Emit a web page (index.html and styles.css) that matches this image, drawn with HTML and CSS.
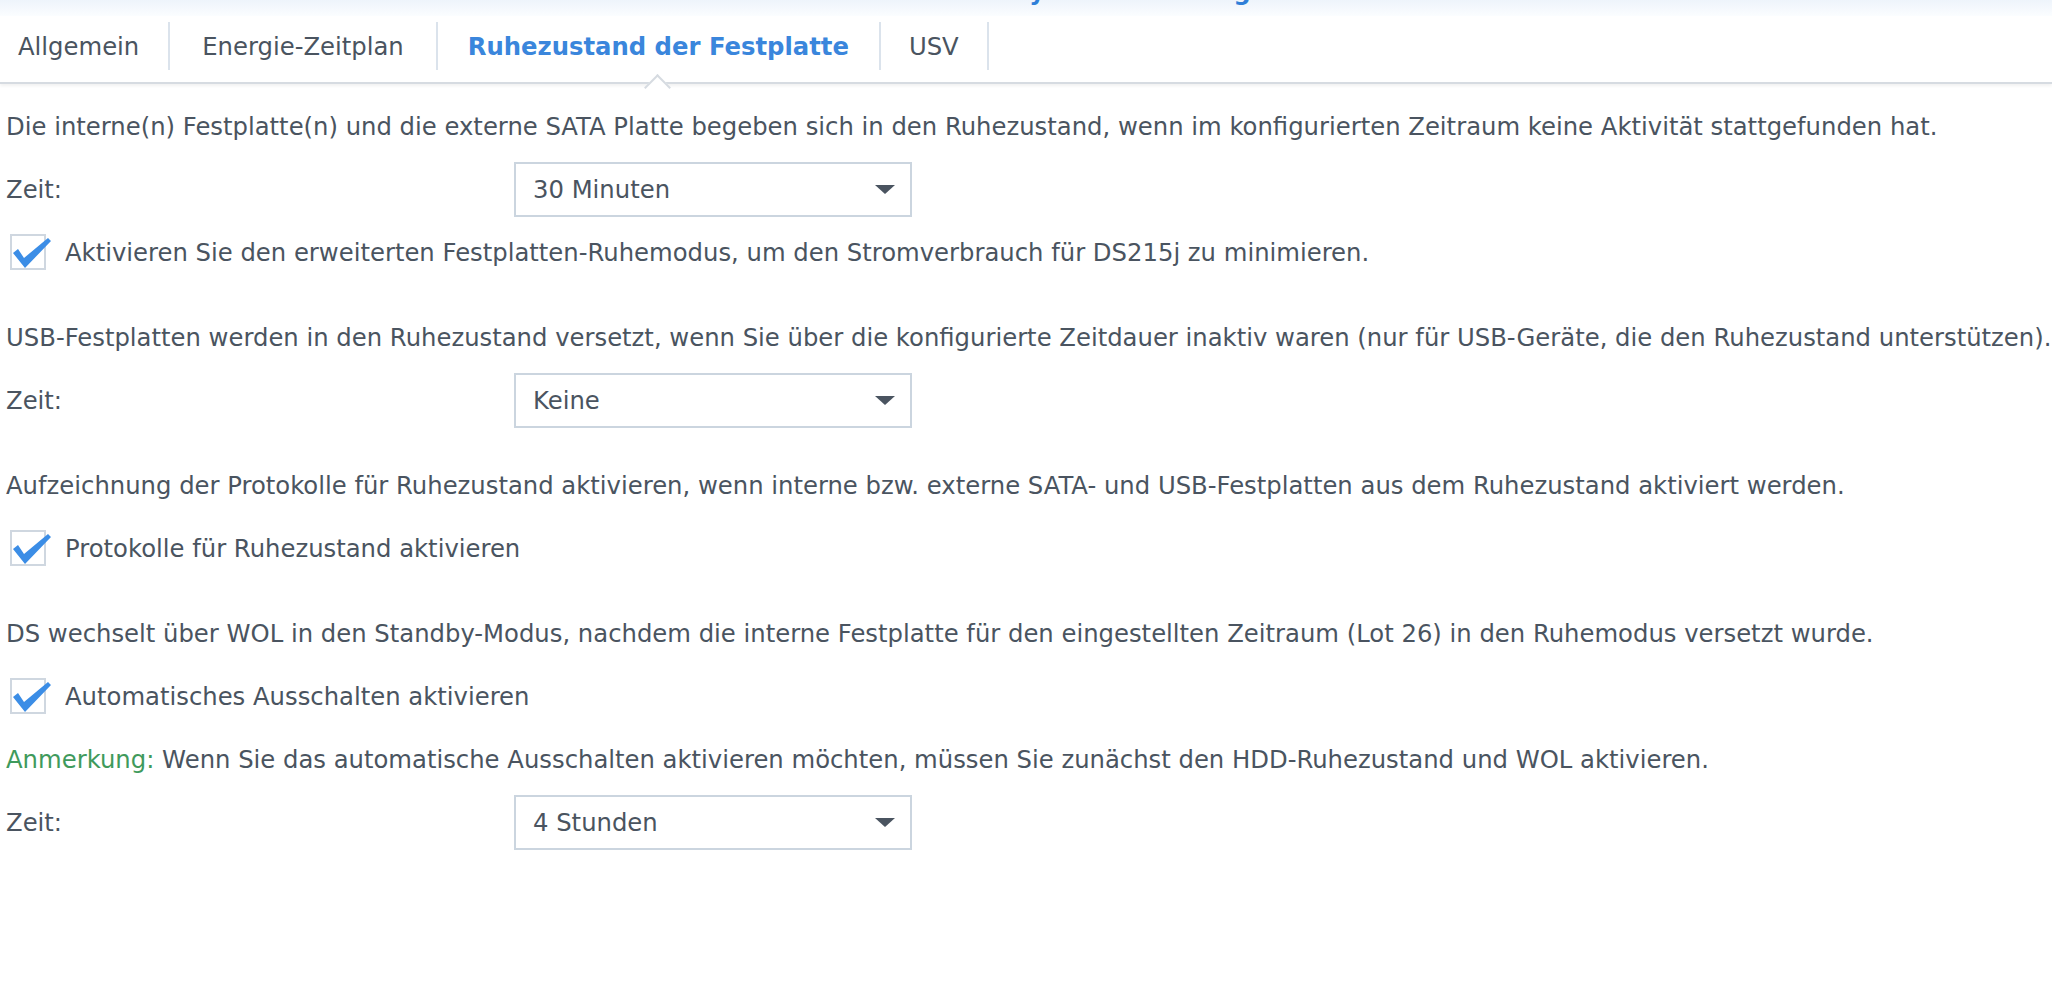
FILE: index.html
```html
<!DOCTYPE html>
<html lang="de">
<head>
  <meta charset="UTF-8">
  <title>Systemsteuerung</title>
  <link rel="stylesheet" href="styles.css">
</head>
<body>

  <div class="titlebar">
    <div class="title">Systemsteuerung</div>
  </div>

  <div class="tabs">
    <div class="tab first">Allgemein</div>
    <div class="tab">Energie-Zeitplan</div>
    <div class="tab active">Ruhezustand der Festplatte</div>
    <div class="tab last">USV</div>
  </div>

  <div class="content">

    <div class="section">
      <div class="row">Die interne(n) Festplatte(n) und die externe SATA Platte begeben sich in den Ruhezustand, wenn im konfigurierten Zeitraum keine Aktivität stattgefunden hat.</div>
      <div class="row">
        <label class="field-label">Zeit:</label>
        <div class="select"><span>30 Minuten</span><i class="arrow"></i></div>
      </div>
      <div class="row">
        <svg class="check" width="44" height="38" viewBox="0 0 44 38">
          <rect x="1" y="1" width="34" height="34" fill="#fff" stroke="#cfd7e0" stroke-width="2"/>
          <path d="M3 19 L8 15 L14 24 L38 4 L41 7 L15 34 Z" fill="#3b8de6"/>
        </svg>
        <span>Aktivieren Sie den erweiterten Festplatten-Ruhemodus, um den Stromverbrauch für DS215j zu minimieren.</span>
      </div>
    </div>

    <div class="section">
      <div class="row">USB-Festplatten werden in den Ruhezustand versetzt, wenn Sie über die konfigurierte Zeitdauer inaktiv waren (nur für USB-Geräte, die den Ruhezustand unterstützen).</div>
      <div class="row">
        <label class="field-label">Zeit:</label>
        <div class="select"><span>Keine</span><i class="arrow"></i></div>
      </div>
    </div>

    <div class="section">
      <div class="row">Aufzeichnung der Protokolle für Ruhezustand aktivieren, wenn interne bzw. externe SATA- und USB-Festplatten aus dem Ruhezustand aktiviert werden.</div>
      <div class="row">
        <svg class="check" width="44" height="38" viewBox="0 0 44 38">
          <rect x="1" y="1" width="34" height="34" fill="#fff" stroke="#cfd7e0" stroke-width="2"/>
          <path d="M3 19 L8 15 L14 24 L38 4 L41 7 L15 34 Z" fill="#3b8de6"/>
        </svg>
        <span>Protokolle für Ruhezustand aktivieren</span>
      </div>
    </div>

    <div class="section">
      <div class="row">DS wechselt über WOL in den Standby-Modus, nachdem die interne Festplatte für den eingestellten Zeitraum (Lot 26) in den Ruhemodus versetzt wurde.</div>
      <div class="row">
        <svg class="check" width="44" height="38" viewBox="0 0 44 38">
          <rect x="1" y="1" width="34" height="34" fill="#fff" stroke="#cfd7e0" stroke-width="2"/>
          <path d="M3 19 L8 15 L14 24 L38 4 L41 7 L15 34 Z" fill="#3b8de6"/>
        </svg>
        <span>Automatisches Ausschalten aktivieren</span>
      </div>
      <div class="row"><span class="note">Anmerkung:</span>&nbsp;Wenn Sie das automatische Ausschalten aktivieren möchten, müssen Sie zunächst den HDD-Ruhezustand und WOL aktivieren.</div>
      <div class="row">
        <label class="field-label">Zeit:</label>
        <div class="select"><span>4 Stunden</span><i class="arrow"></i></div>
      </div>
    </div>

  </div>

</body>
</html>
```

FILE: styles.css
```css
body {
  margin: 0;
  font-family: "DejaVu Sans", Verdana, sans-serif;
  font-size: 24.3px;
  color: #4a5460;
  background: #fff;
}

/* window title, mostly scrolled out of view */
.titlebar {
  height: 16px;
  overflow: hidden;
  background: linear-gradient(#eef4fb, #fbfdff);
}
.title {
  margin-top: -24px;
  padding-left: 1012px;
  font-size: 24px;
  line-height: 32px;
  font-weight: bold;
  color: #2f7fd8;
}

/* tab strip */
.tabs {
  display: flex;
  align-items: flex-start;
  height: 66px;
  background: #fff;
  border-bottom: 2px solid #d6dbe1;
  box-shadow: 0 2px 3px rgba(0, 0, 0, 0.06);
}
.tab {
  position: relative;
  display: flex;
  align-items: center;
  height: 48px;
  margin-top: 6px;
  padding: 0 32px;
  border-right: 2px solid #dbe3ec;
}
.tab.first {
  padding: 0 29px 0 18px;
}
.tab.last {
  padding: 0 28px;
}
.tab.active {
  color: #3a86dc;
  font-weight: bold;
  padding: 0 30px;
}
.tab.active::after {
  content: "";
  position: absolute;
  left: 50%;
  bottom: -27px;
  width: 17px;
  height: 17px;
  margin-left: -10px;
  background: #fff;
  border-left: 2px solid #d6dbe1;
  border-top: 2px solid #d6dbe1;
  transform: rotate(45deg);
}

.content {
  padding: 11px 6px 0;
}
.section + .section {
  margin-top: 22px;
}
.row {
  display: flex;
  align-items: center;
  height: 63px;
  white-space: nowrap;
}

.field-label {
  width: 508px;
}

.select {
  display: flex;
  align-items: center;
  justify-content: space-between;
  box-sizing: border-box;
  width: 398px;
  height: 55px;
  padding: 0 15px 0 17px;
  border: 2px solid #cbd5df;
  background: #fff;
}
.arrow {
  width: 0;
  height: 0;
  border-left: 10px solid transparent;
  border-right: 10px solid transparent;
  border-top: 9px solid #4a5460;
}

.check {
  flex: none;
  margin: 0 11px 0 4px;
  overflow: visible;
}

.note {
  color: #3f9a5c;
}
```
